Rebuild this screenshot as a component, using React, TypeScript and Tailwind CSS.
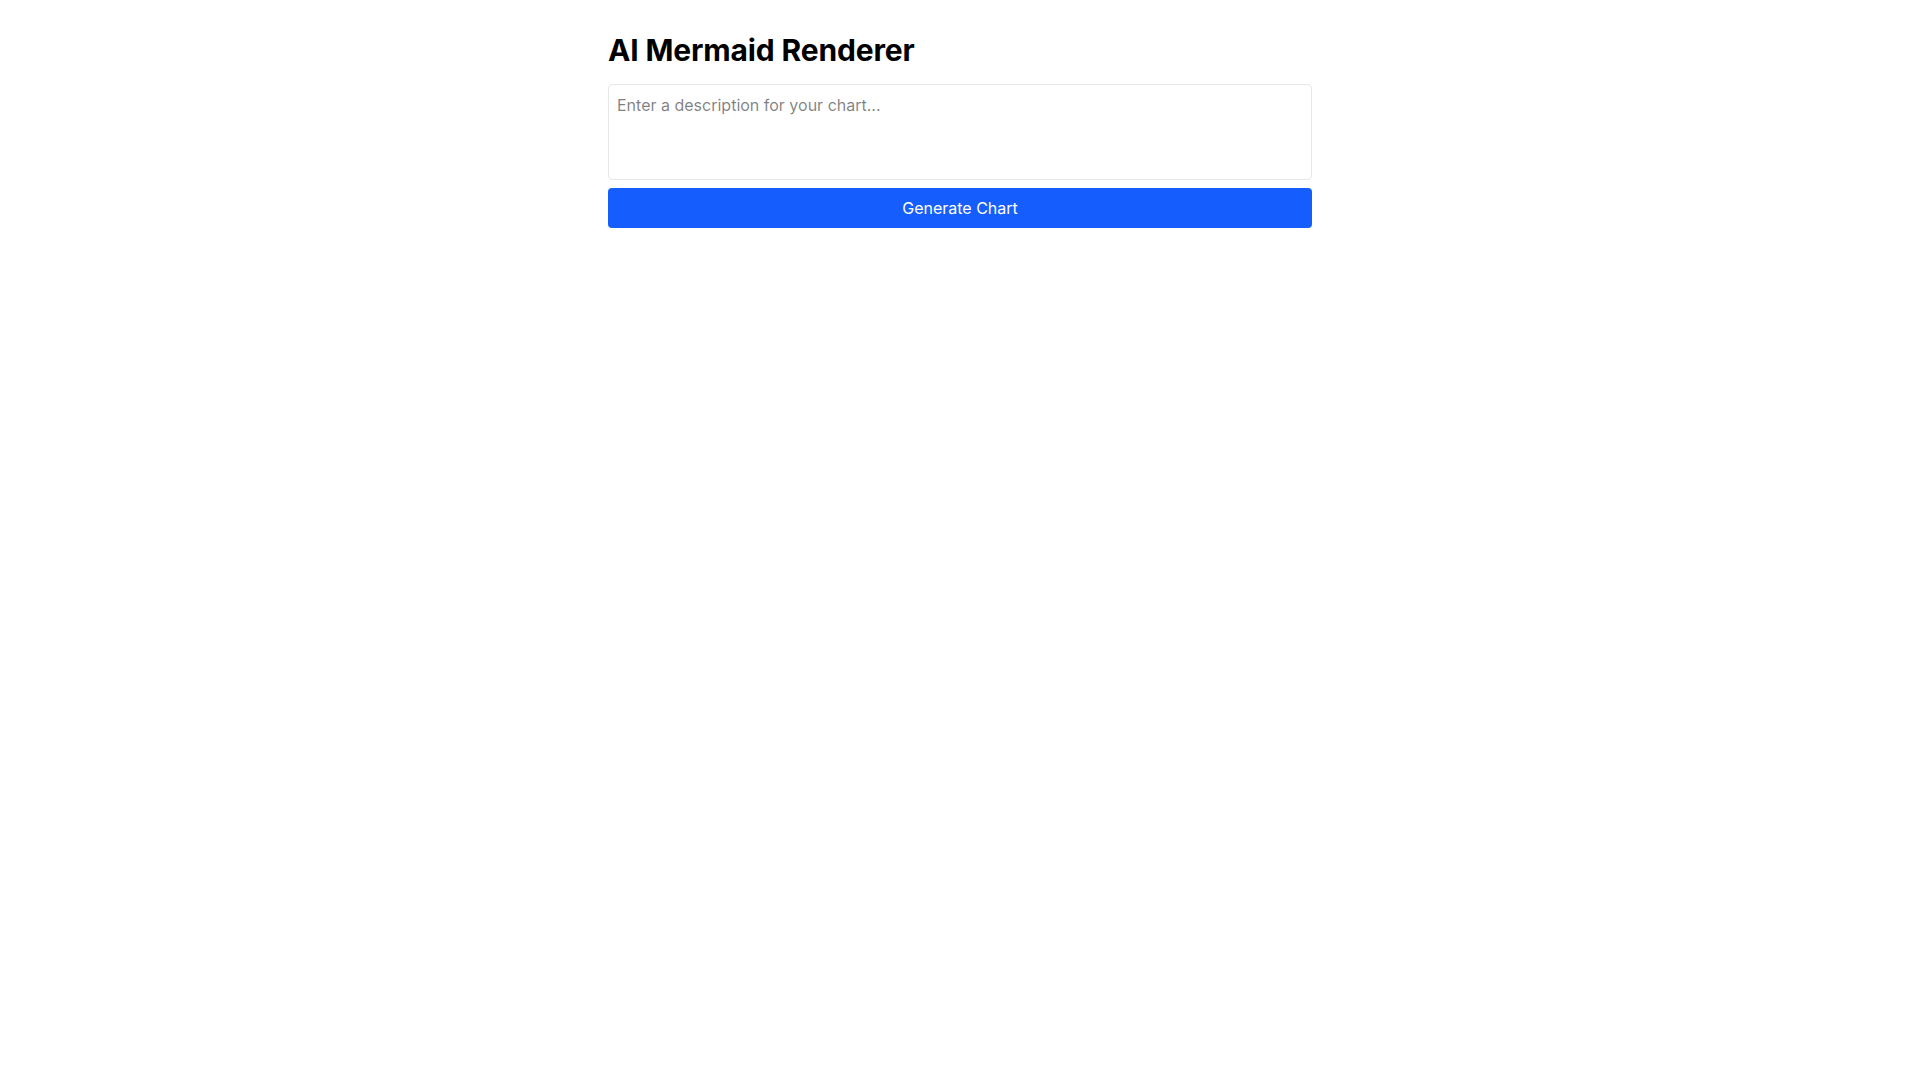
import { useState } from "react";

export default function App() {
  const [prompt, setPrompt] = useState("");

  return (
    <div className="min-h-screen bg-white font-['Inter',sans-serif] text-black">
      <div className="mx-auto max-w-3xl p-8">
        <h1 className="mb-4 text-3xl font-bold tracking-[-0.005em]">AI Mermaid Renderer</h1>
        <textarea
          value={prompt}
          onChange={(e) => setPrompt(e.target.value)}
          placeholder="Enter a description for your chart..."
          className="block h-24 w-full resize-none rounded border border-gray-200 p-2 text-base outline-none"
        />
        <button
          type="button"
          className="mt-2 w-full rounded bg-blue-600 px-4 py-2 text-base text-white"
        >
          Generate Chart
        </button>
      </div>
    </div>
  );
}
